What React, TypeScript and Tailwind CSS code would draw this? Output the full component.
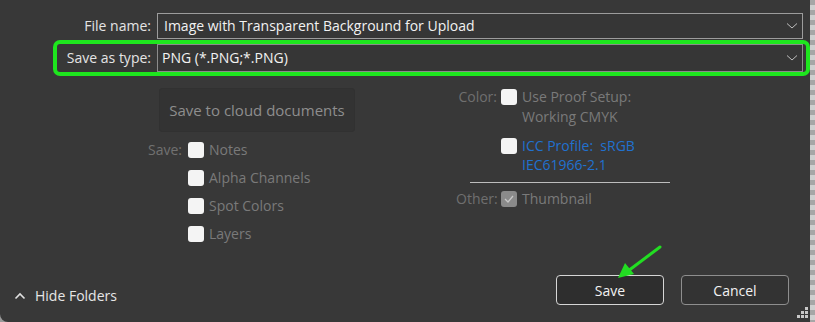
import React from "react";

const font = { fontFamily: '"Segoe UI", "Open Sans", "Noto Sans", sans-serif' };

function Chevron() {
  return (
    <svg width="12" height="8" viewBox="0 0 12 8" className="mr-[4px]">
      <path d="M1 1.5 L6 6 L11 1.5" fill="none" stroke="#bdbdbd" strokeWidth="1" />
    </svg>
  );
}

function Box({ checked = false }: { checked?: boolean }) {
  if (checked) {
    return (
      <div className="w-[16px] h-[16px] rounded-[3px] bg-[#8a8a8a] flex items-center justify-center shrink-0">
        <svg width="10" height="8" viewBox="0 0 10 8">
          <path d="M1 4 L4 7 L9 1" fill="none" stroke="#c8c8c8" strokeWidth="1.3" />
        </svg>
      </div>
    );
  }
  return <div className="w-[16px] h-[16px] rounded-[3px] bg-[#f4f4f4] shrink-0" />;
}

export default function App() {
  return (
    <div className="w-[815px] h-[322px] flex bg-[#9a9a9a]" style={font}>
      <div className="relative w-[810px] h-[322px] bg-[#383838] rounded-bl-[8px] flex flex-col text-[14px]">
        {/* Top rows */}
        <div className="flex items-center h-[26px] mt-[13px]">
          <div className="w-[151px] text-right text-[#e4e4e4] leading-none">File name:</div>
          <div className="ml-[6px] w-[646px] h-[26px] border border-[#9c9c9c] bg-[#363636] flex items-center justify-between pl-[6px]">
            <span className="text-[#f2f2f2] leading-none">Image with Transparent Background for Upload</span>
            <Chevron />
          </div>
        </div>
        <div className="flex items-center h-[28px] mt-[5px]">
          <div className="w-[151px] text-right text-[#e4e4e4] leading-none">Save as type:</div>
          <div className="ml-[6px] w-[646px] h-[28px] border border-[#8c8c8c] bg-[#363636] flex items-center justify-between pl-[4px]">
            <span className="text-[#f2f2f2] leading-none">PNG (*.PNG;*.PNG)</span>
            <Chevron />
          </div>
        </div>
        {/* Green highlight annotation */}
        <div className="absolute left-[53px] top-[40px] w-[757px] h-[36px] border-[4px] border-[#1ee61e] rounded-[7px] pointer-events-none" />

        {/* Middle */}
        <div className="flex mt-[16px]">
          <div className="w-[456px] flex flex-col">
            <div className="ml-[159px] w-[196px] h-[44px] rounded-[3px] border border-[#313131] bg-[#333333] flex items-center justify-center text-[#8e8e8e] text-[15px]">
              Save to cloud documents
            </div>
            <div className="flex flex-col gap-[12px] mt-[10px]">
              {["Notes", "Alpha Channels", "Spot Colors", "Layers"].map((t, i) => (
                <div key={t} className="flex items-center h-[16px]">
                  <div className="w-[182px] text-right text-[#717171] leading-none">{i === 0 ? "Save:" : ""}</div>
                  <div className="ml-[6px]"><Box /></div>
                  <span className="ml-[5px] text-[#7a7a7a] leading-none">{t}</span>
                </div>
              ))}
            </div>
          </div>
          <div className="flex flex-col -mt-[1px]">
            <div className="flex items-start">
              <div className="w-[41px] text-right text-[#6f6f6f] leading-[20px]">Color:</div>
              <div className="ml-[4px] mt-[2px]"><Box /></div>
              <div className="ml-[5px] text-[#7a7a7a] leading-[20px]">
                Use Proof Setup:<br />Working CMYK
              </div>
            </div>
            <div className="flex items-start mt-[9px]">
              <div className="w-[41px]" />
              <div className="ml-[4px] mt-[2px]"><Box /></div>
              <div className="ml-[5px] text-[#2171cf] leading-[19px]">
                ICC Profile:&nbsp; sRGB<br />IEC61966-2.1
              </div>
            </div>
            <div className="ml-[14px] mt-[8px] w-[200px] h-px bg-[#bdbdbd]" />
            <div className="flex items-center mt-[8px] h-[16px]">
              <div className="w-[41px] text-right text-[#6f6f6f] leading-none">Other:</div>
              <div className="ml-[4px]"><Box checked /></div>
              <span className="ml-[5px] text-[#7a7a7a] leading-none">Thumbnail</span>
            </div>
          </div>
        </div>

        {/* Bottom */}
        <div className="mt-auto mb-[17px] flex items-center">
          <div className="ml-[14px] mt-[11px] flex items-center gap-[9px] text-[#e6e6e6]">
            <svg width="12" height="8" viewBox="0 0 12 8">
              <path d="M1.5 6.5 L6 2 L10.5 6.5" fill="none" stroke="#e0e0e0" strokeWidth="1.6" />
            </svg>
            <span className="leading-none">Hide Folders</span>
          </div>
          <div className="ml-auto mr-[21px] flex gap-[17px]">
            <div className="w-[108px] h-[30px] rounded-[4px] border border-[#d6d6d6] bg-[#2e2e2e] flex items-center justify-center text-[#f2f2f2]">
              Save
            </div>
            <div className="w-[108px] h-[30px] rounded-[4px] border border-[#8e8e8e] bg-[#333333] flex items-center justify-center text-[#f2f2f2]">
              Cancel
            </div>
          </div>
        </div>

        {/* Green arrow annotation */}
        <svg className="absolute left-[612px] top-[240px]" width="60" height="46" viewBox="0 0 60 46">
          <path d="M48 7 L16 31" stroke="#22dd22" strokeWidth="3" strokeLinecap="round" fill="none" />
          <path d="M6 38 L13 23 L22 34 Z" fill="#22dd22" />
        </svg>

        {/* Resize grip */}
        <svg className="absolute left-[797px] top-[307px]" width="12" height="12" viewBox="0 0 12 12">
          <rect x="8" y="0" width="3" height="3" fill="#c8c8c8" />
          <rect x="4" y="4" width="3" height="3" fill="#c8c8c8" />
          <rect x="8" y="4" width="3" height="3" fill="#c8c8c8" />
          <rect x="0" y="8" width="3" height="3" fill="#c8c8c8" />
          <rect x="4" y="8" width="3" height="3" fill="#c8c8c8" />
          <rect x="8" y="8" width="3" height="3" fill="#c8c8c8" />
        </svg>
      </div>
      <div className="w-[5px] h-[322px] bg-[repeating-linear-gradient(180deg,#a6a6a6_0px,#a6a6a6_5px,#d0d0d0_5px,#d0d0d0_10px)]" />
    </div>
  );
}
